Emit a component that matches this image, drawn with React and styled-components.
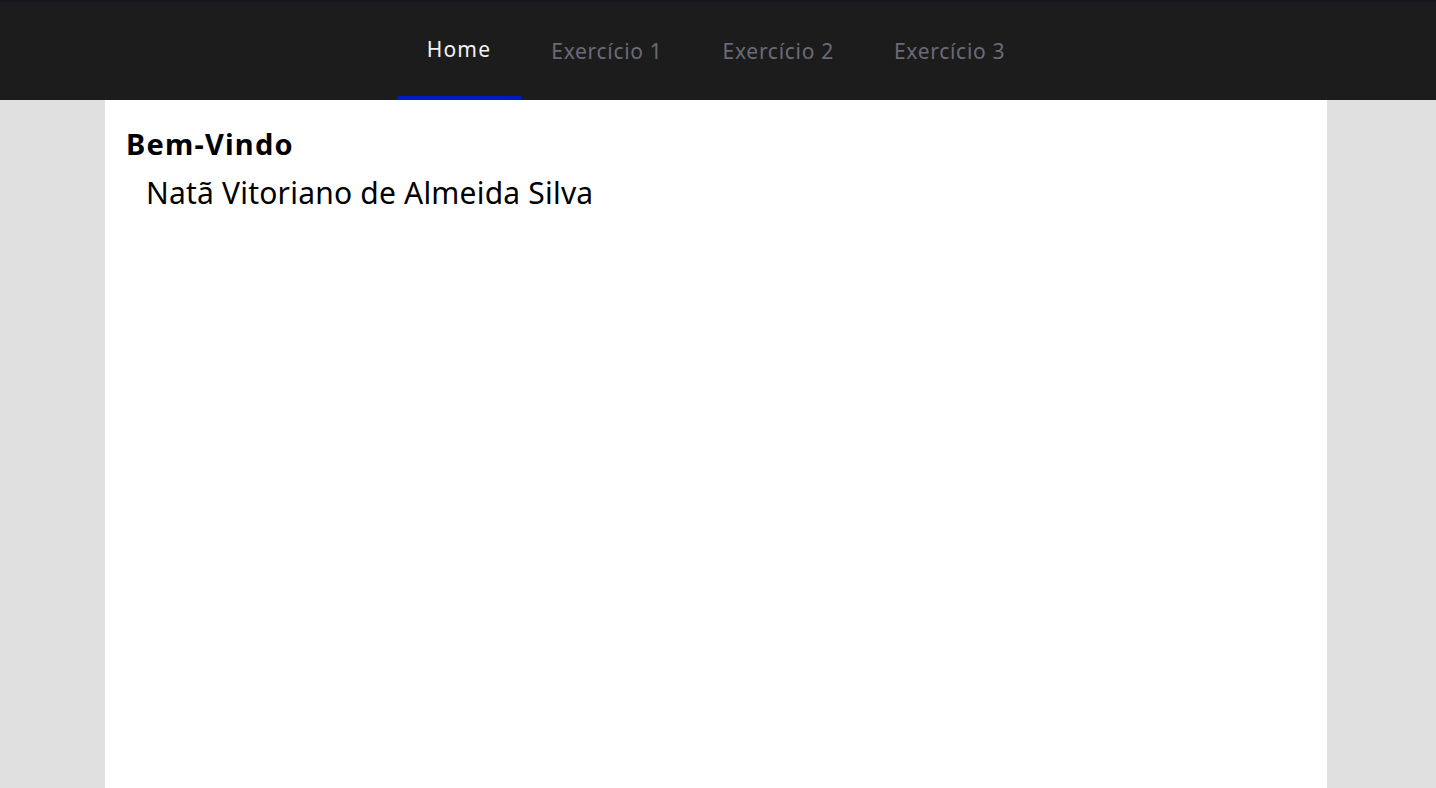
import React from "react";
import styled, { createGlobalStyle } from "styled-components";

const Global = createGlobalStyle`
  html, body { margin: 0; padding: 0; }
  body {
    background: #e0e0e0;
    font-family: "Noto Sans", "Open Sans", sans-serif;
    min-height: 788px;
  }
`;

const NavBar = styled.nav`
  height: 100px;
  background: #1c1c1c;
  border-top: 2px solid #17171d;
  box-sizing: border-box;
  display: flex;
  justify-content: center;
`;

const NavList = styled.ul`
  list-style: none;
  margin: 0 0 0 -4px;
  padding: 0;
  display: flex;
`;

const NavItem = styled.li`
  padding: ${(p) => (p.$active ? "33px" : "35px")} 30px 0;
  font-size: 21px;
  line-height: 28px;
  letter-spacing: ${(p) => (p.$active ? "1.2px" : "0.7px")};
  color: ${(p) => (p.$active ? "#f2f2f2" : "#6a6a78")};
  border-bottom: 4px solid ${(p) => (p.$active ? "#0019c8" : "transparent")};
  box-sizing: border-box;
  height: 98px;
  cursor: pointer;
`;

const Page = styled.main`
  background: #fff;
  margin: 0 109px 0 105px;
  min-height: 688px;
  padding: 24px 21px;
  box-sizing: border-box;
`;

const Title = styled.h1`
  margin: 0;
  font-size: 29px;
  font-weight: 700;
  line-height: 40px;
  letter-spacing: 1.2px;
  color: #000;
`;

const Name = styled.p`
  margin: 9px 0 0 20px;
  font-size: 30px;
  line-height: 40px;
  letter-spacing: 0.2px;
  color: #000;
`;

const items = ["Home", "Exercício 1", "Exercício 2", "Exercício 3"];

export default function App() {
  return (
    <>
      <Global />
      <NavBar>
        <NavList>
          {items.map((t, i) => (
            <NavItem key={t} $active={i === 0}>
              {t}
            </NavItem>
          ))}
        </NavList>
      </NavBar>
      <Page>
        <Title>Bem-Vindo</Title>
        <Name>Natã Vitoriano de Almeida Silva</Name>
      </Page>
    </>
  );
}
